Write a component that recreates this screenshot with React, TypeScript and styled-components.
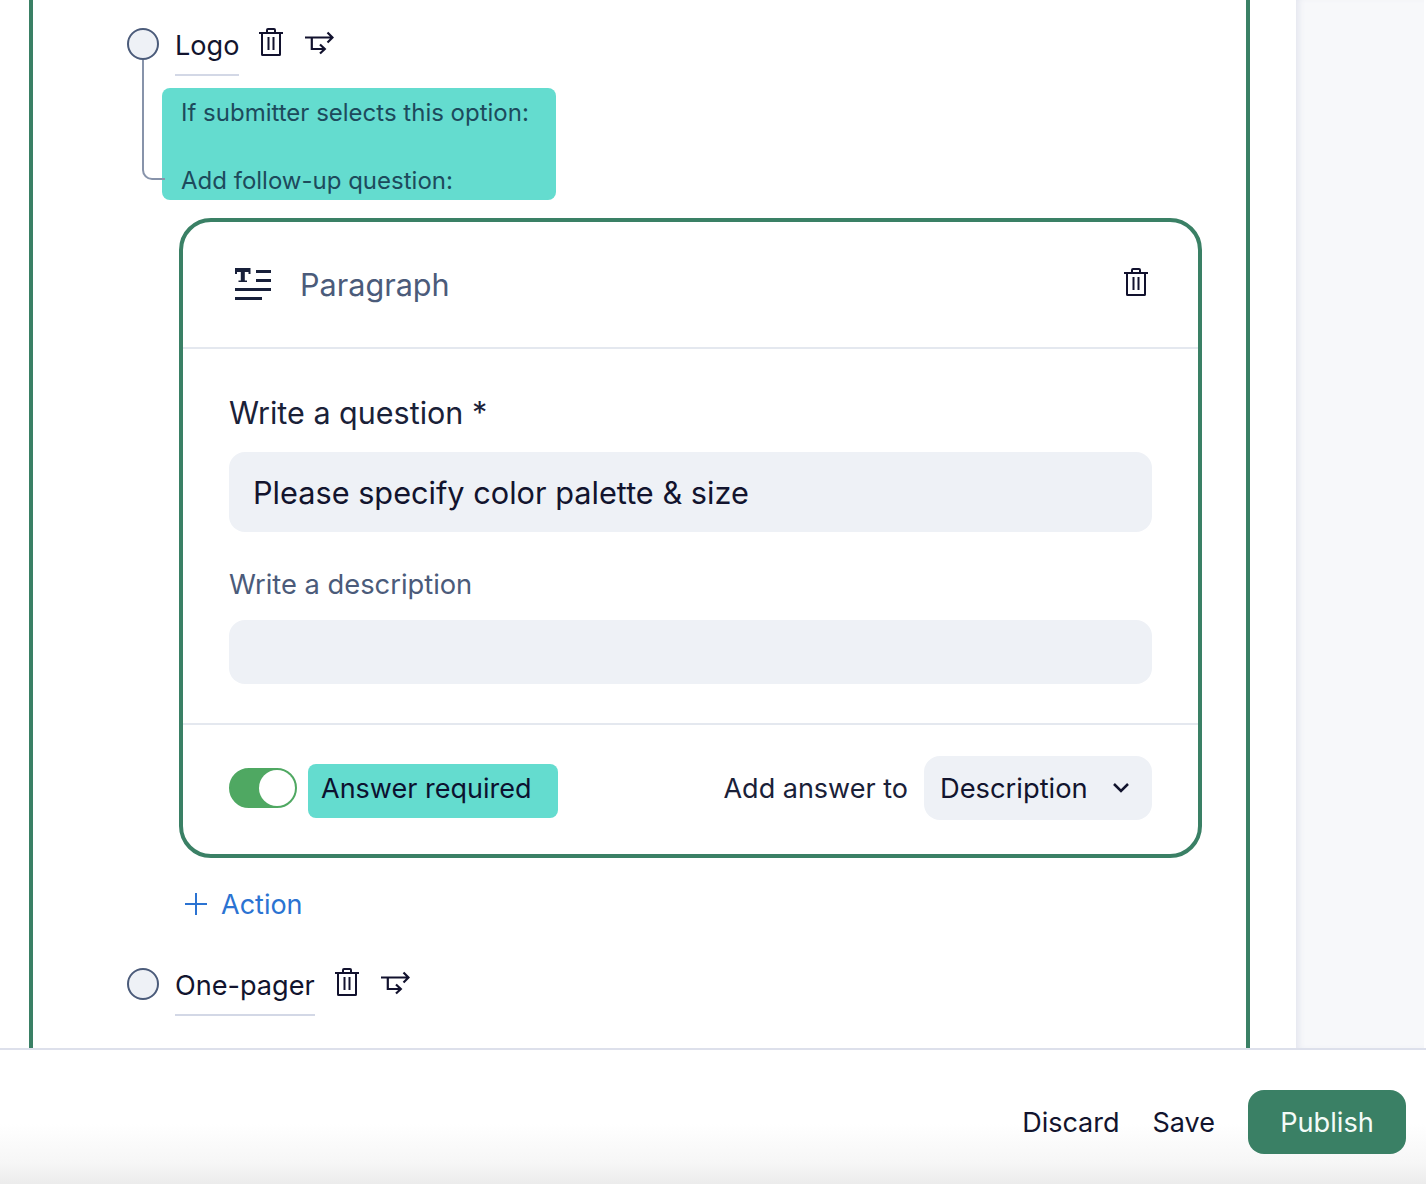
import styled, { createGlobalStyle } from "styled-components";

const GlobalStyle = createGlobalStyle`
  html, body {
    margin: 0;
    padding: 0;
    background: #fff;
    font-family: Inter, "Liberation Sans", sans-serif;
    color: #12142e;
  }
`;

const Page = styled.div`
  width: 1426px;
  height: 1184px;
  overflow: hidden;
  display: flex;
  flex-direction: column;
`;

const Workspace = styled.div`
  height: 1048px;
  display: flex;
  flex: none;
`;

const Canvas = styled.main`
  width: 1296px;
  flex: none;
  padding-left: 29px;
  box-sizing: border-box;
`;

const SidePanel = styled.aside`
  width: 128px;
  flex: none;
  background: #f7f8fa;
  box-shadow: inset 6px 0 6px -3px #e4e6ef;
`;

const Editor = styled.section`
  width: 1221px;
  height: 1048px;
  box-sizing: border-box;
  border-left: 4px solid #3a8065;
  border-right: 4px solid #3a8065;
  padding: 28px 0 0 94px;
`;

const OptionRow = styled.div<{ $top?: number }>`
  display: flex;
  align-items: flex-start;
  height: 48px;
  margin-top: ${(p) => p.$top ?? 0}px;
`;

const Radio = styled.span`
  width: 32px;
  height: 32px;
  flex: none;
  box-sizing: border-box;
  border: 2px solid #4b5b7a;
  border-radius: 50%;
  background: #eef1f6;
  margin-right: 16px;
`;

const OptionLabel = styled.span`
  font-size: 27.1px;
  line-height: 36px;
  height: 46px;
  border-bottom: 2px solid #d3d8e6;
  margin-right: 20px;
`;

const TrashSvg = styled.svg<{ $gap?: number }>`
  flex: none;
  margin-right: ${(p) => p.$gap ?? 0}px;
`;

const HeaderTrash = styled(TrashSvg)`
  margin-bottom: 6px;
`;

const BranchSvg = styled.svg`
  flex: none;
  margin-top: 3px;
`;

const ParagraphSvg = styled.svg`
  flex: none;
  margin-bottom: 3px;
`;

const FollowUp = styled.div`
  position: relative;
  margin-left: 35px;
  margin-top: 12px;
`;

const Connector = styled.span`
  position: absolute;
  left: -20px;
  top: -28px;
  width: 23px;
  height: 120px;
  box-sizing: border-box;
  border-left: 2px solid #8793aa;
  border-bottom: 2px solid #8793aa;
  border-bottom-left-radius: 10px;
`;

const Hint = styled.div`
  width: 394px;
  height: 112px;
  box-sizing: border-box;
  padding: 8px 0 0 19px;
  background: #64dccf;
  border-radius: 8px;
  font-size: 24px;
  line-height: 34px;
  color: #1d4a5c;
`;

const Card = styled.div`
  width: 1023px;
  height: 640px;
  box-sizing: border-box;
  margin: 18px 0 0 17px;
  border: 4px solid #3a8065;
  border-radius: 32px;
  display: flex;
  flex-direction: column;
`;

const CardHeader = styled.header`
  height: 127px;
  flex: none;
  box-sizing: border-box;
  border-bottom: 2px solid #e4e8ef;
  display: flex;
  align-items: center;
  padding: 0 50px 0 52px;
`;

const CardTitle = styled.span`
  font-size: 30.6px;
  color: #4b5b7a;
  margin-left: 28px;
  flex: 1;
`;

const CardBody = styled.div`
  height: 376px;
  flex: none;
  box-sizing: border-box;
  border-bottom: 2px solid #e4e8ef;
  padding: 44px 46px 0;
  display: flex;
  flex-direction: column;
`;

const QuestionLabel = styled.label`
  font-size: 30.5px;
  line-height: 40px;
  height: 59px;
  color: #1a2138;
`;

const DescriptionLabel = styled.label`
  font-size: 27.3px;
  line-height: 36px;
  color: #4b5b7a;
  margin: 35px 0 17px;
`;

const Field = styled.div<{ $height: number }>`
  height: ${(p) => p.$height}px;
  flex: none;
  box-sizing: border-box;
  padding: 1px 0 0 24px;
  display: flex;
  align-items: center;
  background: #eef1f6;
  border-radius: 16px;
  font-size: 30.7px;
  line-height: 38px;
  color: #12142e;
`;

const CardFooter = styled.footer`
  flex: 1;
  display: flex;
  align-items: center;
  padding: 0 46px 3px;
`;

const Toggle = styled.span`
  width: 68px;
  height: 40px;
  flex: none;
  box-sizing: border-box;
  border-radius: 20px;
  border: 2px solid #4fa862;
  background: #4fa862;
  display: flex;
  justify-content: flex-end;
  margin-right: 11px;
`;

const ToggleKnob = styled.span`
  width: 36px;
  height: 36px;
  border-radius: 50%;
  background: #fff;
`;

const RequiredTag = styled.span`
  width: 250px;
  height: 54px;
  box-sizing: border-box;
  padding: 0 0 5px 13px;
  margin-top: 6px;
  display: flex;
  align-items: center;
  background: #64dccf;
  border-radius: 8px;
  font-size: 27px;
  color: #0c1230;
`;

const AnswerTarget = styled.span`
  margin-left: auto;
  margin-right: 16px;
  font-size: 27px;
  color: #1a2138;
`;

const Select = styled.div`
  width: 228px;
  height: 64px;
  box-sizing: border-box;
  padding: 0 23px 0 16px;
  display: flex;
  align-items: center;
  justify-content: space-between;
  background: #eef1f6;
  border-radius: 16px;
  font-size: 27.3px;
`;

const ActionLink = styled.div`
  display: flex;
  align-items: center;
  gap: 14px;
  height: 38px;
  margin: 27px 0 0 23px;
  font-size: 27px;
  color: #2b73d2;
`;

const BottomBar = styled.footer`
  flex: 1;
  box-sizing: border-box;
  border-top: 2px solid #dde0eb;
  background: linear-gradient(#fff 0, #fff 55%, #f6f6f6 85%, #ececec 100%);
  display: flex;
  justify-content: flex-end;
  padding: 40px 20px 0 0;
`;

const TextButton = styled.span`
  height: 64px;
  line-height: 66px;
  font-size: 27px;
  margin-right: 33px;
`;

const PublishButton = styled.span`
  width: 158px;
  height: 64px;
  line-height: 66px;
  text-align: center;
  font-size: 27.2px;
  color: #f4fbf8;
  background: #3a8065;
  border-radius: 16px;
`;

const trashPath =
  "M0 5h24M3 5v21.5a.5.5 0 0 0 .5.5h17a.5.5 0 0 0 .5-.5V5M8 5V2a1 1 0 0 1 1-1h6a1 1 0 0 1 1 1v3M9.5 9v13M14.5 9v13";

const TrashIcon = ({ gap }: { gap?: number }) => (
  <TrashSvg $gap={gap} width="24" height="28" viewBox="0 0 24 28" fill="none" stroke="#12122e" strokeWidth="2">
    <path d={trashPath} />
  </TrashSvg>
);

const BranchIcon = () => (
  <BranchSvg width="29" height="24" viewBox="0 0 29 24" fill="none" stroke="#12122e" strokeWidth="2.2">
    <path d="M0 6.5h27.5M22.5 1.5l5 5-5 5M6.8 6.5V18h13M15 13.5l4.8 4.5-4.8 4.5" />
  </BranchSvg>
);

const ParagraphIcon = () => (
  <ParagraphSvg width="37" height="33" viewBox="0 0 37 33" fill="#18203a">
    <path d="M0 1h15.5v6h-2V5h-3.7v8.5H12V15H3.5v-1.5h2.3V5H2v2H0zM21 3h15v3H21zM21 12h15v3H21zM0 21h36v3H0zM0 30h27v3H0z" />
  </ParagraphSvg>
);

export default function App() {
  return (
    <Page>
      <GlobalStyle />
      <Workspace>
        <Canvas>
          <Editor>
            <OptionRow>
              <Radio />
              <OptionLabel>Logo</OptionLabel>
              <TrashIcon gap={22} />
              <BranchIcon />
            </OptionRow>
            <FollowUp>
              <Hint>
                If submitter selects this option:
                <br />
                <br />
                Add follow-up question:
              </Hint>
              <Connector />
              <Card>
                <CardHeader>
                  <ParagraphIcon />
                  <CardTitle>Paragraph</CardTitle>
                  <HeaderTrash width="24" height="28" viewBox="0 0 24 28" fill="none" stroke="#12122e" strokeWidth="2">
                    <path d={trashPath} />
                  </HeaderTrash>
                </CardHeader>
                <CardBody>
                  <QuestionLabel>Write a question *</QuestionLabel>
                  <Field $height={80}>Please specify color palette &amp; size</Field>
                  <DescriptionLabel>Write a description</DescriptionLabel>
                  <Field $height={64} />
                </CardBody>
                <CardFooter>
                  <Toggle><ToggleKnob /></Toggle>
                  <RequiredTag>Answer required</RequiredTag>
                  <AnswerTarget>Add answer to</AnswerTarget>
                  <Select>
                    Description
                    <svg width="16" height="10" viewBox="0 0 16 10" fill="none" stroke="#12142e" strokeWidth="2.5">
                      <path d="M1 1l7 7 7-7" />
                    </svg>
                  </Select>
                </CardFooter>
              </Card>
              <ActionLink>
                <svg width="22" height="22" viewBox="0 0 22 22" fill="none" stroke="#2b73d2" strokeWidth="2">
                  <path d="M11 0v22M0 11h22" />
                </svg>
                Action
              </ActionLink>
            </FollowUp>
            <OptionRow $top={45}>
              <Radio />
              <OptionLabel>One-pager</OptionLabel>
              <TrashIcon gap={22} />
              <BranchIcon />
            </OptionRow>
          </Editor>
        </Canvas>
        <SidePanel />
      </Workspace>
      <BottomBar>
        <TextButton>Discard</TextButton>
        <TextButton>Save</TextButton>
        <PublishButton>Publish</PublishButton>
      </BottomBar>
    </Page>
  );
}
